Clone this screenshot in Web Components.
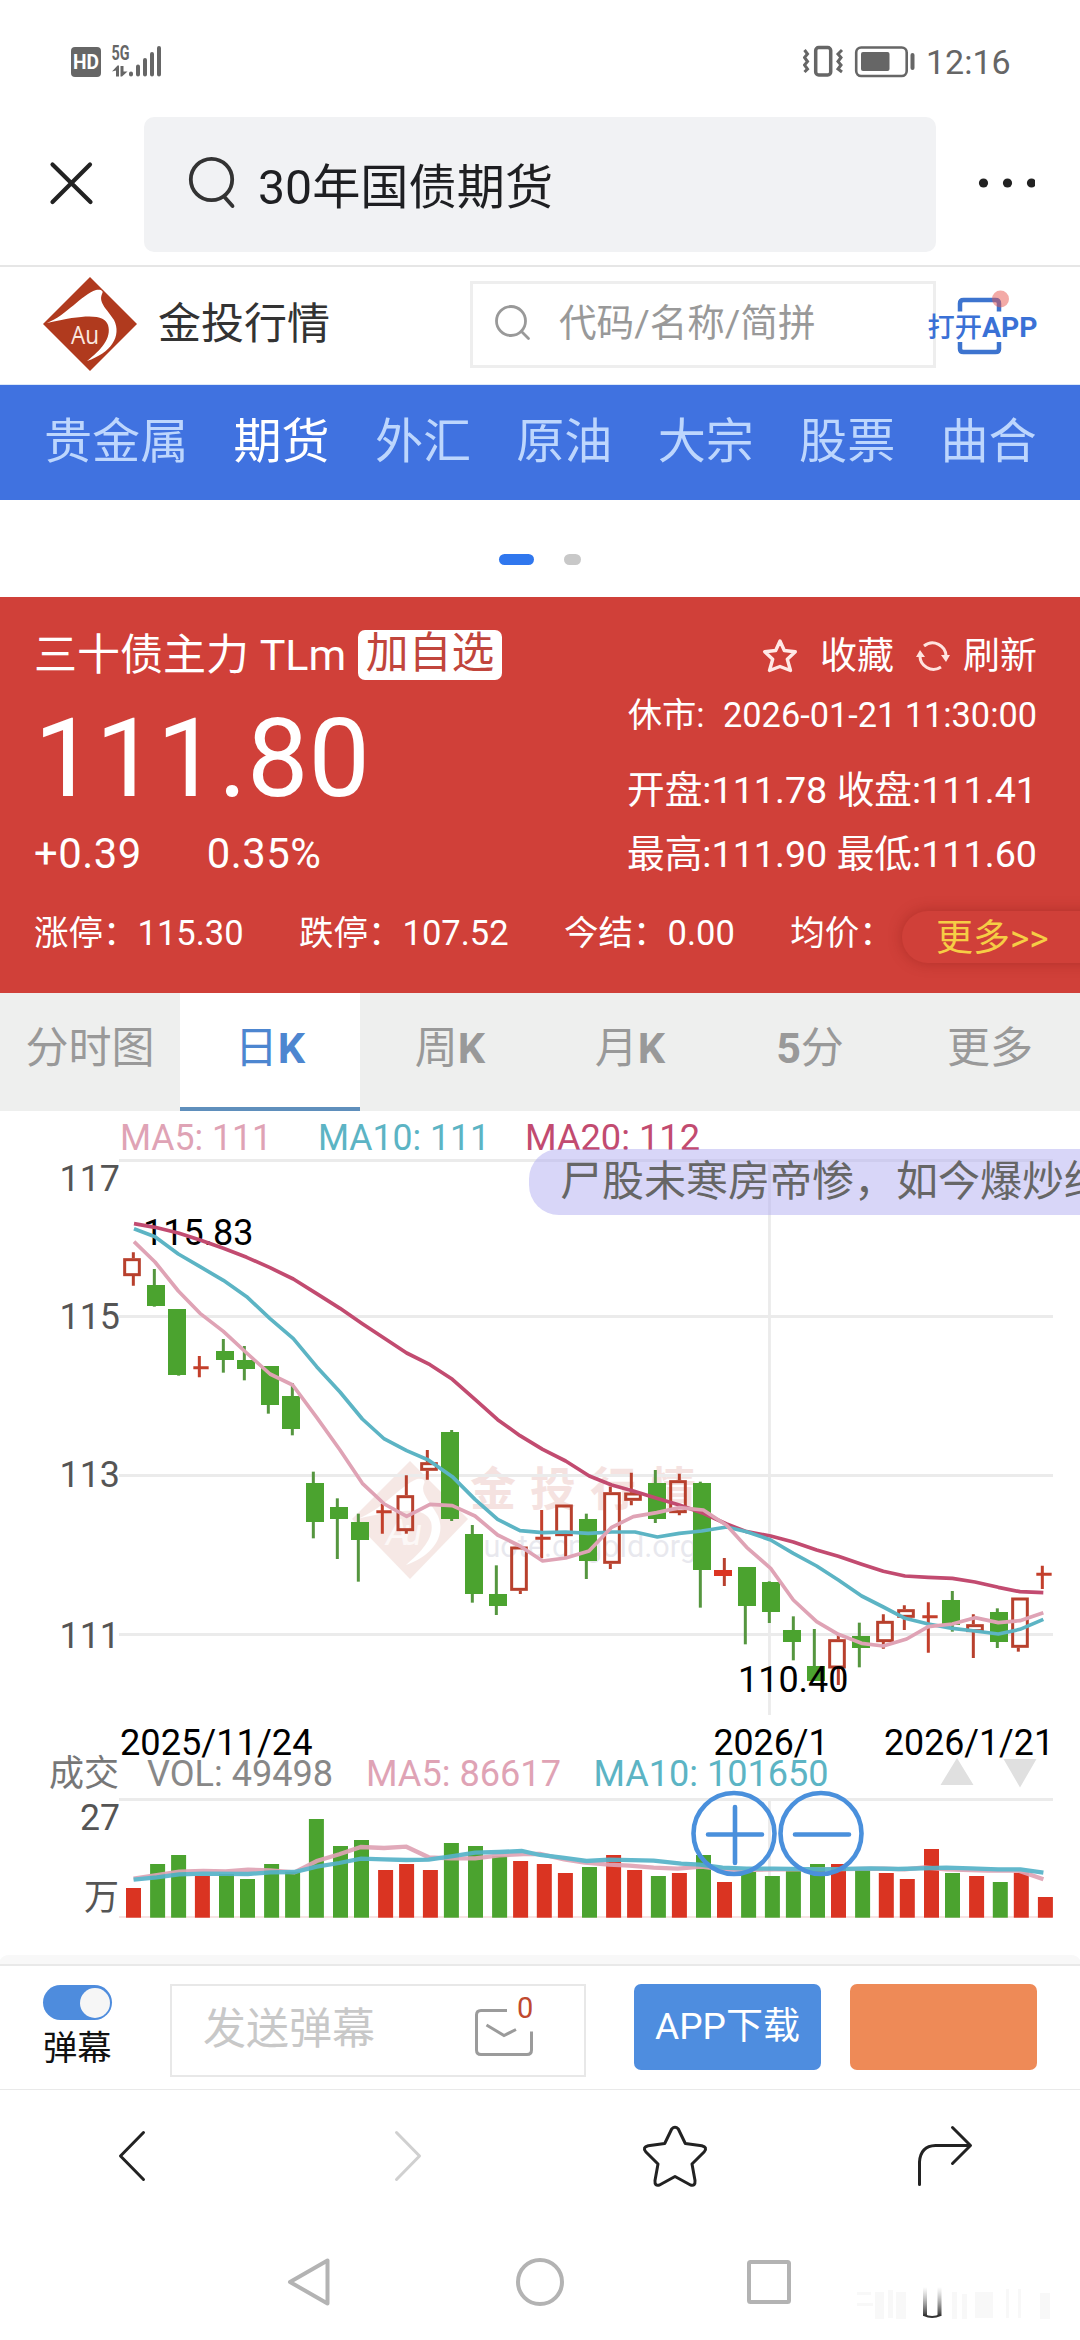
<!DOCTYPE html>
<html lang="zh-CN">
<head>
<meta charset="utf-8">
<title>金投行情</title>
<style>
html,body{margin:0;padding:0;background:#fff}
body{width:1080px;height:2340px;overflow:hidden;font-family:Roboto,"Noto Sans CJK SC",sans-serif;color:#222}
</style>
</head>
<body>
<quote-page></quote-page>
<script>
const define = (name, css, html, hook) => customElements.define(name, class extends HTMLElement {
  constructor() {
    super();
    this.attachShadow({mode: 'open'}).innerHTML = `<style>*{box-sizing:border-box}svg{display:block;flex:none}:host{display:block}${css}</style>${html}`;
    if (hook) hook(this.shadowRoot);
  }
});

define('status-bar', `
:host{display:flex;height:84px;padding:40px 69px 0 71px;justify-content:space-between}
svg text{font-family:Roboto,sans-serif}
.r{display:flex}.t{font-size:34px;line-height:44px;color:#666;margin-left:10px;width:85px;white-space:nowrap}`, `
<svg width="100" height="44" viewBox="71 40 100 44" fill="#666">
 <rect x="71" y="47" width="30" height="30" rx="4"/>
 <text x="86" y="68.700" font-size="20" font-weight="700" fill="#fff" text-anchor="middle" textLength="26" lengthAdjust="spacingAndGlyphs">HD</text>
 <text x="111.500" y="59.500" font-size="19.500" font-weight="700" textLength="18" lengthAdjust="spacingAndGlyphs">5G</text>
 <path d="M112 71.500l5.500-6h1.500v11h-3v-6zM120.500 66h3v5.500h4l-5.500 5h-1.500z"/>
 <path d="M131 73.500v1M138 66.500v8M145 60v14.500M152 54v20.500M159 48v26.500" stroke="#666" stroke-width="4" stroke-linecap="round"/>
</svg>
<div class="r"><svg width="113" height="44" viewBox="803 40 113 44" fill="none" stroke="#666">
 <rect x="815.700" y="47.500" width="15" height="27.500" rx="3" stroke-width="3.500"/>
 <path d="M804.500 50l3 4-3 3.500 3 4-3 3.500 3 4-3 3M842 50l-4 4 3 3.500-3 4 3 3.500-3 4 4 3" stroke-width="3"/>
 <rect x="856.200" y="47.500" width="50.500" height="28.500" rx="5" stroke-width="2.600"/>
 <rect x="861" y="52" width="28.500" height="19" rx="2" fill="#666" stroke="none"/>
 <path d="M912.500 55v13" stroke-width="4" stroke-linecap="round"/>
</svg><div class="t">12:16</div></div>`);

define('search-bar', `
:host{display:flex;align-items:flex-start;height:183px;padding:33px 44px 0 48px;border-bottom:2px solid #e6e6e6}
.box{display:flex;align-items:center;width:792px;height:135px;margin-left:49px;background:#f1f2f4;border-radius:10px;padding-left:44px;font-size:48.200px;color:#1e1f22;white-space:nowrap}
.box span{margin-left:22px;padding-top:6px;line-height:60px}
.dots{margin-left:39px}`, `
<svg width="47" height="135" viewBox="48 117 47 135" fill="none" stroke="#222" stroke-width="4.200" stroke-linecap="round"><path d="M52.500 164.500l38 37.500M90 164.500L52.500 202"/></svg>
<div class="box"><svg width="48" height="60" viewBox="188 155 48 60" fill="none" stroke="#333" stroke-width="3.800" stroke-linecap="round"><circle cx="211.500" cy="179.500" r="20.700"/><path d="M224.500 197l8 9"/></svg><span>30年国债期货</span></div>
<svg class="dots" width="60" height="135" viewBox="975 117 60 135" fill="#222"><circle cx="983.500" cy="183" r="4.600"/><circle cx="1007.500" cy="183" r="4.600"/><circle cx="1031.500" cy="183" r="4.600"/></svg>`);

define('au-logo', `:host{width:94px;height:94px}`, `
<svg width="94" height="94" viewBox="0 0 94 94"><path d="M47 0L94 47 47 94 0 47z" fill="#b03a1e"/>
<path d="M4 46C24 38 38 18 53 13c5-1 8 1 6 4-4 9 6 16 12 26 8 16-3 33-27 41 14-11 25-23 21-36C62 38 46 36 4 46z" fill="#fff"/>
<text x="42" y="67" font-size="25" fill="#fbe8e0" text-anchor="middle" font-family="Open Sans,sans-serif" textLength="28" lengthAdjust="spacingAndGlyphs">Au</text></svg>`);

define('site-header', `
:host{display:flex;align-items:center;height:118px;padding:0 0 4px 43px;white-space:nowrap}
.name{font-size:43px;line-height:50px;color:#333;margin-left:21px;width:172px}
.box{display:flex;align-items:center;width:466px;height:87px;border:3px solid #eee;margin-left:140px;padding-left:22px;font-size:37.600px;line-height:50px;color:#999}
.box span{margin-left:28px;padding-bottom:2px}
.app{margin-left:-11px}.app text{font-family:Roboto,"Noto Sans CJK SC",sans-serif}`, `
<au-logo></au-logo><div class="name">金投行情</div>
<div class="box"><svg width="36" height="40" viewBox="495 305 36 40" fill="none" stroke="#999" stroke-width="2.800" stroke-linecap="round"><circle cx="511" cy="322" r="14.500"/><path d="M521.500 332.500l7 7"/></svg><span>代码/名称/简拼</span></div>
<svg class="app" width="120" height="80" viewBox="924 284 120 80"><path d="M959 311.500v-8q0-3.500 3.500-3.500h32q3.500 0 3.500 3.500v8M959 342v7q0 3 3.500 3h32q3.500 0 3.500-3v-7" fill="none" stroke="#3d74cf" stroke-width="4.500"/><circle cx="999.500" cy="299" r="8.500" fill="#e8564e" opacity=".5"/>
<text x="926.500" y="336.500" font-size="28" font-weight="700" fill="#3a71d6" textLength="110" lengthAdjust="spacingAndGlyphs"><tspan font-weight="500" font-size="27">打开</tspan>APP</text></svg>`);

define('category-nav', `
:host{display:flex;gap:45.200px;height:115px;background:#4072e0;padding:0 0 0 44px;font-size:48.100px;line-height:114px;color:#bdd6fd;white-space:nowrap;box-shadow:0 -1px 0 #dce8f8}
::slotted(.on){color:#fff}`, `<slot></slot>`);

define('page-dots', `
:host{display:flex;justify-content:center;gap:30px;height:97px;padding-top:54px}
i{height:11px;border-radius:6px;width:17px;background:#c8c8c8}i.a{width:35px;background:#3077ee}`, `<i class="a"></i><i></i>`);

define('quote-panel', `
:host{position:relative;height:396px;background:#d04039;color:#fff;padding:33px 43px 0 34px;white-space:nowrap;overflow:hidden}
.top{display:flex;justify-content:space-between;height:283px}
.title{font-size:43px;line-height:50px}
.title b{display:inline-block;font-weight:400;height:50px;line-height:47px;background:#fff;color:#c1453c;border-radius:7px;padding:0 8px;margin-left:1px;vertical-align:top;font-size:42.800px}
.price{font-size:109.300px;line-height:110px;margin-top:24px}
.chg{display:flex;gap:65px;font-size:41.800px;letter-spacing:.5px;line-height:40px;margin-top:20px}
.r{display:flex;flex-direction:column;align-items:flex-end;font-size:37.700px;line-height:40px}
.act{display:flex;align-items:center;font-size:37px;line-height:54px;height:54px}
.time{font-size:34.300px;margin-top:11px}
.time span{margin-right:10px}
.row{display:flex;gap:55.500px;font-size:34.500px;line-height:40px}
.more{position:absolute;left:902px;top:314px;width:220px;height:52px;border-radius:26px;padding-left:34px;background:#d04039;box-shadow:0 0 14px rgba(120,20,15,.35);color:#f6cd45;font-size:37px;line-height:55px}`, `
<div class="top"><div><div class="title">三十债主力 TLm <b>加自选</b></div><div class="price">111.80</div><div class="chg"><span>+0.39</span><span>0.35%</span></div></div>
<div class="r"><div class="act"><svg width="38" height="38" viewBox="0 0 38 38" fill="none" stroke="#ffe9e6" stroke-width="3.400" stroke-linejoin="round"><path d="M19 3l4.300 9.500 11 1.200-8 7.600 3.200 11.200L19 28.500 8.500 32.500l3.200-11.200-8-7.600 11-1.200z"/></svg><span style="margin-left:21px">收藏</span>
<svg style="margin-left:21px" width="36" height="36" viewBox="0 0 36 36" fill="none" stroke="#ffe3df" stroke-width="3"><path d="M9 7A13.500 13.500 0 0 1 31 18M5 16A13.500 13.500 0 0 0 26 28"/><path d="M26 16h9l-4 7zM1 18h9L5 11z" fill="#ffe3df" stroke="none"/></svg><span style="margin-left:12px">刷新</span></div>
<div class="time"><span>休市:</span> 2026-01-21 11:30:00</div><div style="margin-top:35px">开盘:111.78 收盘:111.41</div><div style="margin-top:24px">最高:111.90 最低:111.60</div></div></div>
<div class="row"><span>涨停：115.30</span><span>跌停：107.52</span><span>今结：0.00</span><span>均价：</span></div>
<div class="more">更多&gt;&gt;</div>`);

define('period-tabs', `
:host{display:grid;grid-template-columns:repeat(6,1fr);height:118px;background:#eeefee;font-size:43px;color:#999;line-height:110px;text-align:center;white-space:nowrap}`, `<slot></slot>`);
define('period-tab', `
:host{height:118px}:host([on]){background:#fff;border-bottom:4px solid #5f8fbc;color:#4d86d0}
::slotted(b){font-weight:700}`, `<slot></slot>`);

// Candles: [kind, body left, body top, body bottom, wick x, wick top, wick bottom] in thirds of a pixel from (100,1200).
// Kinds: g falling, r rising (hollow), f rising (filled), c doji.
const candles = [
['r',70,175,228,100,157,257],['g',141,255,318,163,207,320],['g',204,327,525,236,327,527],['c',280,503,503,298,468,532],['g',348,453,480,370,417,518],['g',411,480,507,433,438,541],['g',483,498,615,505,498,641],['g',546,588,687,577,549,706],['g',618,849,966,640,815,1015],['g',690,921,957,712,895,1077],['g',753,966,1020,775,941,1145],['c',829,935,935,847,912,1001],['r',890,886,993,919,826,1001],['r',961,787,812,982,750,839],['g',1023,696,957,1055,690,963],['g',1095,1002,1182,1117,975,1208],['g',1167,1182,1218,1189,1096,1245],['r',1231,1040,1172,1261,1040,1182],['c',1306,1015,1015,1325,930,1075],['r',1366,914,1008,1397,914,1070],['g',1437,957,1083,1459,941,1137],
['r',1510,877,1091,1531,860,1107],['r',1573,878,902,1594,818,916],['g',1644,849,957,1666,810,969],['r',1708,841,939,1738,821,946],['g',1779,849,1110,1801,845,1223],['f',1842,1110,1128,1873,1074,1158],['g',1914,1101,1218,1936,1101,1333],['g',1986,1146,1236,2008,1144,1269],['g',2049,1290,1326,2080,1249,1381],['g',2121,1398,1443,2143,1287,1443],['r',2185,1318,1405,2215,1305,1455],['g',2256,1308,1344,2278,1268,1402],['r',2329,1263,1326,2350,1243,1346],['r',2392,1228,1253,2413,1216,1290],['c',2467,1250,1250,2485,1207,1358],['g',2526,1200,1275,2557,1173,1295],['r',2599,1273,1296,2620,1243,1374],['g',2670,1236,1326,2692,1225,1344],['r',2734,1193,1343,2755,1193,1355],['c',2809,1123,1123,2827,1097,1167]];
const drawCandle = ([k,l,t,b,w,wt,wb]) => {
  const G = '#4ba32f', R = '#b8402d', F = '#db3522';
  if (k === 'g') return `<path d="M${w} ${wt}V${wb}" stroke="#55963f" stroke-width="9"/><rect x="${l}" y="${t}" width="54" height="${b-t}" fill="${G}"/>`;
  if (k === 'f') return `<path d="M${w} ${wt}V${wb}" stroke="${R}" stroke-width="9"/><rect x="${l}" y="${t}" width="54" height="${b-t}" fill="${F}"/>`;
  if (k === 'c') return `<path d="M${w} ${wt}V${wb}M${l} ${t}h46" stroke="#c33f2b" stroke-width="9"/>`;
  return `<path d="M${w} ${wt}V${t}M${w} ${b}V${wb}" stroke="${R}" stroke-width="9"/><rect x="${l+4}" y="${t+4}" width="44" height="${Math.max(b-t-8,12)}" fill="none" stroke="${R}" stroke-width="9"/>`;
};
const ma20 = '102,71 165,82 235,99 300,120 370,145 440,172 510,203 580,237 650,281 720,325 787,371 853,415 920,459 990,494 1057,538 1125,598 1193,659 1260,707 1328,748 1397,783 1468,828 1535,855 1600,873 1670,895 1738,915 1805,938 1880,972 1940,995 2012,1008 2080,1026 2150,1050 2215,1069 2285,1093 2350,1114 2415,1128 2485,1132 2557,1135 2625,1146 2695,1162 2760,1175 2830,1178';
const ma10 = '102,86 165,110 235,162 300,200 370,241 440,290 510,356 580,416 650,500 720,576 787,657 853,717 920,752 985,780 1057,830 1125,898 1193,958 1260,992 1328,998 1397,996 1465,1000 1535,996 1605,996 1672,1011 1738,1000 1805,993 1880,981 1940,995 2012,1020 2080,1060 2150,1098 2215,1140 2285,1188 2350,1221 2415,1255 2485,1272 2557,1285 2625,1293 2695,1302 2760,1288 2830,1258';
const ma5 = '102,125 165,186 235,273 300,340 370,394 440,459 510,522 578,555 650,652 720,750 787,850 853,912 920,949 990,913 1057,917 1125,948 1193,1005 1260,1038 1328,1083 1397,1074 1467,1053 1535,982 1600,950 1670,938 1738,923 1810,930 1880,976 1940,1042 2012,1105 2080,1200 2150,1265 2215,1303 2285,1330 2350,1338 2420,1317 2485,1280 2557,1272 2625,1253 2695,1268 2760,1262 2830,1238';
// Volume bars: [colour, left, top]
const bars = [];
[['r',366,624],['g',436,552],['g',497,525],['r',566,588],['g',636,582],['g',697,597],['g',767,552],['g',828,575],['g',897,417],['g',967,498],['g',1028,480],['r',1098,570],['r',1159,552],['r',1228,570],['g',1289,489],['g',1359,498],['g',1429,528],['r',1490,543],['r',1559,552]].forEach(([c,x,y]) => bars.push([c, x/2.904, 1680+y/3]));
[['r',52,399],['g',122,381],['r',192,345],['r',253,390],['g',322,408],['r',383,399],['g',453,345],['r',514,426],['g',584,396],['g',653,408],['g',714,393],['g',784,372],['r',845,372],['g',915,390],['r',984,399],['r',1045,417],['r',1115,327],['g',1176,399],['r',1246,408],['g',1315,426],['r',1376,398],['r',1446,471]].forEach(([c,x,y]) => bars.push([c, 540+x/2.904, 1740+y/3]));
const pts = (a, b) => a.map(([x,y]) => `${(x/2.904).toFixed(1)},${(1680+y/3).toFixed(1)}`).concat(b.map(([x,y]) => `${(540+x/2.904).toFixed(1)},${(1740+y/3).toFixed(1)}`)).join(' ');
const v5 = pts([[388,596],[455,585],[520,575],[590,573],[655,574],[720,569],[785,571],[855,577],[920,543],[985,523],[1048,501],[1115,504],[1180,500],[1245,532],[1310,535],[1380,535],[1450,526],[1520,522]],[[0,342],[70,358],[130,368],[200,374],[260,377],[330,383],[400,386],[470,380],[530,388],[600,390],[680,388],[800,388],[1000,386],[1060,388],[1115,382],[1180,388],[1300,392],[1390,392],[1462,418]]);
const v10 = pts([[388,599],[455,592],[520,583],[590,581],[720,582],[785,577],[855,576],[920,560],[985,549],[1048,536],[1115,538],[1180,540],[1245,539],[1310,529],[1380,518],[1450,516],[1515,513]],[[0,345],[65,353],[135,363],[200,359],[330,362],[410,371],[465,374],[530,383],[600,386],[680,386],[820,388],[960,385],[1040,387],[1180,383],[1250,385],[1330,388],[1395,388],[1462,398]]);
const T = (x, y, w, color, s) => `<text x="${x}" y="${y}" fill="${color}" textLength="${w}" lengthAdjust="spacingAndGlyphs">${s}</text>`;
const P = '#dfa3b5', C = '#5cb4c4', M = '#c24b70';

define('kline-chart', `
:host{position:relative;height:853px;overflow:hidden}
text{font-family:Roboto,"Noto Sans CJK SC",sans-serif;font-size:36.500px}
.bullet{position:absolute;left:529px;top:38px;width:640px;height:66px;border-radius:30px;background:rgba(178,174,242,.5);padding-left:31px;font-size:42px;line-height:65px;color:#666;white-space:nowrap}`, `
<svg width="1080" height="853" viewBox="0 1111 1080 853">
<g opacity=".11"><path d="M410 1461l58 58-58 60-58-60z" fill="#b03a1e"/><path d="M357 1519c25-9 43-33 60-40 6-1 9 1 7 5-4 10 6 17 14 32 8 19-4 39-32 49 15-13 29-27 25-43-5-14-25-15-74-3z" fill="#fff"/></g>
<text x="386" y="1545" fill="#fff" opacity=".7" font-style="italic" textLength="36">Au</text>
<g fill="#c0392b" opacity=".14" font-weight="700"><text x="470" y="1505" style="font-size:46px;letter-spacing:14px">金投行情</text></g>
<text x="466" y="1557" fill="#777799" opacity=".16" style="font-size:32px" textLength="231" lengthAdjust="spacingAndGlyphs">quote.cngold.org</text>
<path d="M119 1160.500H1053M119 1316.500H1053M119 1475.500H1053M119 1634.500H1053M769.500 1160V1715M119 1799.500H1053M769.500 1800V1916" fill="none" stroke="#ebebeb" stroke-width="2.800"/>
<path d="M119 1917H1052" stroke="#f7e4e4" stroke-width="2"/>
${T(120,1149.500,152,P,'MA5: 111')}${T(318,1149.500,172,C,'MA10: 111')}${T(525,1149.500,175,M,'MA20: 112')}
${T(59.500,1191,60.500,'#555','117')}${T(59.500,1328.500,60.500,'#555','115')}${T(59.500,1487,60.500,'#555','113')}${T(59.500,1647.500,60.500,'#555','111')}
${T(143,1245,110.500,'#000','115.83')}
<g transform="translate(100 1200) scale(.33333)">${candles.map(drawCandle).join('')}
<g fill="none" stroke-width="11" stroke-linejoin="round"><polyline points="${ma20}" stroke="${M}"/><polyline points="${ma10}" stroke="${C}"/><polyline points="${ma5}" stroke="${P}"/></g></g>
${T(738,1691.500,110.500,'#000','110.40')}
${T(120,1755,192.500,'#000','2025/11/24')}${T(713.500,1754.500,115,'#000','2026/1')}${T(884,1754.500,170,'#000','2026/1/21')}
${T(49,1786,70,'#777','成交')}${T(147,1786,186,'#888','VOL: 49498')}${T(366,1786,195,P,'MA5: 86617')}${T(593.500,1786,235,C,'MA10: 101650')}
<path d="M957 1758l16.500 27h-33zM1020 1787.500l-16.500-28.500h33z" fill="#e0e0e0"/>
${T(80,1830,40,'#555','27')}${T(84,1910,35,'#555','万')}
${bars.map(([c,x,y]) => `<rect x="${x.toFixed(1)}" y="${y.toFixed(1)}" width="15" height="${(1917.700-y).toFixed(1)}" fill="${c==='r'?'#da3422':'#4ba32f'}"/>`).join('')}
<g fill="none" stroke-width="4.300" opacity=".92"><polyline points="${v5}" stroke="${P}"/><polyline points="${v10}" stroke="#55b2c8"/></g>
<g fill="none" stroke="#4a90dc" stroke-width="4.600" stroke-linecap="round"><circle cx="734" cy="1833.500" r="40.500"/><circle cx="821" cy="1833.500" r="40.500"/><path d="M708 1834.500h54M735 1807v56M795 1834.500h54"/></g>
<path d="M0 1964V1960Q3 1955 9 1955H1071Q1077 1955 1080 1960V1964z" fill="#f8f8f8"/>
</svg><div class="bullet">尸股未寒房帝惨，如今爆炒绝</div>`);

define('bullet-bar', `
:host{display:flex;align-items:flex-start;height:126px;border-top:2px solid #e9e9e9;border-bottom:1.500px solid #e9e9e9;padding:18px 43px 0 43px;white-space:nowrap}
.sw{width:70px;margin-top:1px;font-size:34.300px;line-height:40px;color:#111}
.sw i{display:flex;justify-content:flex-end;align-items:center;width:69px;height:35px;border-radius:18px;background:#4e8cdd;padding-right:2px;margin-bottom:8px}
.sw i::after{content:"";width:30px;height:30px;border-radius:50%;background:#f6f6f6}
.in{display:flex;width:416px;height:93px;border:2.500px solid #e8e8e8;margin-left:57px;padding-left:31px;font-size:43px;line-height:87px;color:#c8c8c8}
.in svg{margin-left:93px}
.btn{width:187px;height:86px;border-radius:7px;background:#4e8ddf;color:#fff;font-size:37px;line-height:86px;text-align:center;margin-left:48px}
.btn.o{background:#ee8a57;margin-left:29px}`, `
<div class="sw"><i></i>弹幕</div>
<div class="in">发送弹幕<svg width="72" height="87" viewBox="468 1986.500 72 87" fill="none" stroke="#9b9b9b" stroke-width="3"><path d="M507 2011h-26q-4.500 0-4.500 4.500v35q0 4.500 4.500 4.500h46q4.500 0 4.500-4.500v-18.500M486.500 2025.500l17.500 10.500 12-6"/><text x="517" y="2018.500" font-size="29" fill="#c0492f" stroke="none" font-family="Roboto">0</text></svg></div>
<div class="btn">APP下载</div><div class="btn o"></div>`);

define('browser-nav', `:host{height:131px}`, `
<svg width="1080" height="131" viewBox="0 2090 1080 131" fill="none" stroke="#222" stroke-width="3" stroke-linecap="round" stroke-linejoin="round">
<path d="M143.500 2132.500L120.500 2156l23 23.500"/><path d="M396.500 2132.500l23 23.500-23 23.500" stroke="#d0d0d0"/>
<path d="M678.300 2129l7 14.500 16.500 2.200q6 1.500 2.500 6L692 2164l3 16.500q.5 6-4.500 4.500L675 2176.500l-15.500 8.500q-5 1.500-4.500-4.500l3-16.500-12.300-12.300q-3.500-4.500 2.500-6l16.500-2.200 7-14.500q3.300-3.500 6.600 0z"/>
<path d="M919.500 2184.500V2162q1-16 16-16.500H970M952.500 2127.500l18 18-18 18"/></svg>`);

define('system-nav', `:host{height:119px}`, `
<svg width="1080" height="119" viewBox="0 2221 1080 119"><defs><linearGradient id="f" x1="0" y1="0" x2="0" y2="1"><stop offset="0" stop-color="#888" stop-opacity="0"/><stop offset="1" stop-color="#333"/></linearGradient></defs>
<g fill="none" stroke="#b3b3b3" stroke-width="4" stroke-linejoin="round"><path d="M290 2282l37.500-21.500v43z"/><circle cx="540" cy="2282" r="22"/><rect x="749" y="2262" width="40" height="40" rx="1.500"/></g>
<g fill="#000" opacity=".025"><rect x="857" y="2292" width="14" height="3"/><rect x="857" y="2303" width="16" height="3"/><rect x="875" y="2292" width="9" height="27"/><rect x="888" y="2290" width="5" height="28"/><rect x="896" y="2292" width="10" height="27"/><rect x="952" y="2292" width="5" height="27"/><rect x="962" y="2294" width="5" height="25"/><rect x="975" y="2292" width="18" height="26"/><rect x="1006" y="2289" width="3" height="29"/><rect x="1018" y="2289" width="3" height="29"/><rect x="1040" y="2293" width="10" height="26"/></g>
<rect x="923" y="2287" width="4" height="29" fill="url(#f)"/><rect x="937.500" y="2287" width="4" height="29" fill="url(#f)"/><path d="M924 2315q8 4 16.500 0" fill="none" stroke="#333" stroke-width="2"/></svg>`);

define('quote-page', `:host{display:flex;flex-direction:column;width:1080px;height:2340px;background:#fff}:host>*{flex:none}`, `
<status-bar></status-bar><search-bar></search-bar><site-header></site-header>
<category-nav><span>贵金属</span><span class="on">期货</span><span>外汇</span><span>原油</span><span>大宗</span><span>股票</span><span>曲合</span></category-nav>
<page-dots></page-dots><quote-panel></quote-panel>
<period-tabs><period-tab>分时图</period-tab><period-tab on>日<b>K</b></period-tab><period-tab>周<b>K</b></period-tab><period-tab>月<b>K</b></period-tab><period-tab><b>5</b>分</period-tab><period-tab>更多</period-tab></period-tabs>
<kline-chart></kline-chart><bullet-bar></bullet-bar><browser-nav></browser-nav><system-nav></system-nav>`);
</script>
</body>
</html>
